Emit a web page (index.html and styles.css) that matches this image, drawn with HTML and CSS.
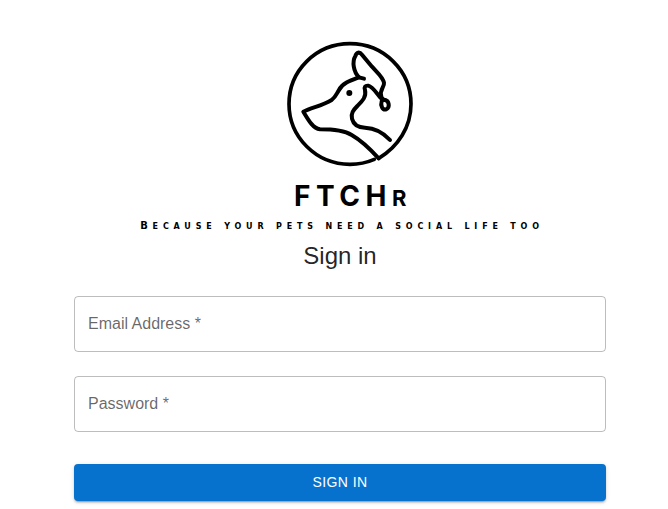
FILE: index.html
```html
<!DOCTYPE html>
<html lang="en">
<head>
<meta charset="utf-8">
<title>FTCHr - Sign in</title>
<link rel="stylesheet" href="styles.css">
</head>
<body>
<main class="page">
  <svg class="logo" viewBox="0 0 480 435" width="160" height="145" fill="none" stroke="#000" stroke-linecap="round" stroke-linejoin="round" aria-label="FTCHr logo">
    <path class="ring" d="M313 388 C290 398 265 403 240 403 C138 403 57 321 57 222 C57 122 138 41 240 41 C341 41 423 122 423 222 C423 290 385 350 326 385"/>
    <path class="line" d="M326 385 C305 362 280 335 245 315 C225 303 190 298 150 298 C130 295 118 275 100 245 C125 232 155 228 185 210 C198 200 200 190 207 180 C217 160 240 152 267 142 C250 125 246 95 256 78 C260 67 268 64 276 74 L306 110 C322 128 338 140 342 158 C344 172 327 178 334 200 C337 207 341 210 345 210"/>
    <path class="line" d="M267 142 L282 146"/>
    <path class="line" d="M345 210 C357 212 361 232 349 238 C337 242 331 226 335 214 C337 209 341 208 345 210"/>
    <path class="line" d="M332 204 C320 190 308 170 295 167 C285 166 282 172 285 180 C290 202 275 215 262 228 C250 240 242 250 246 266 C250 282 262 292 285 293 C315 294 340 308 360 330"/>
    <circle cx="238" cy="189" r="9" fill="#000" stroke="none"/>
  </svg>
  <h1 class="brand">FTCH<span class="brand-small">R</span></h1>
  <p class="tagline">Because your pets need a social life too</p>
  <h2 class="title">Sign in</h2>
  <form class="form">
    <label class="field">Email Address *</label>
    <label class="field">Password *</label>
    <button class="submit" type="button">SIGN IN</button>
  </form>
</main>
</body>
</html>
```
FILE: styles.css
```css
* { box-sizing: border-box; }
html, body { margin: 0; height: 100%; background: #fff; overflow: hidden; }
.page {
  display: flex;
  flex-direction: column;
  align-items: center;
  padding: 30px 0 0 12px;
  font-family: "Liberation Sans", Arial, sans-serif;
}
.logo { display: block; margin-left: 20px; }
.ring { stroke-width: 11; }
.line { stroke-width: 12; }
.brand {
  margin: 3px 0 0 26px;
  font-family: "Inter", sans-serif;
  font-size: 28px;
  font-weight: 700;
  line-height: 36px;
  letter-spacing: 5.5px;
  color: #000;
}
.brand-small { font-size: 22px; }
.tagline {
  margin: 3px 0 0 4px;
  font-family: "DejaVu Sans", sans-serif;
  font-size: 8px;
  font-weight: 700;
  line-height: 14px;
  text-transform: uppercase;
  letter-spacing: 4.82px;
  color: #000;
}
.tagline::first-letter { font-size: 10px; }
.title {
  margin: 6px 0 0;
  font-size: 24px;
  font-weight: 400;
  line-height: 32px;
  color: rgba(0, 0, 0, .87);
}
.form {
  display: flex;
  flex-direction: column;
  width: 532px;
  margin-top: 24px;
  gap: 24px;
}
.field {
  display: flex;
  align-items: center;
  height: 56px;
  padding: 0 13px;
  border: 1px solid rgba(0, 0, 0, .26);
  border-radius: 4px;
  font-size: 16px;
  color: rgba(0, 0, 0, .6);
}
.submit {
  height: 37px;
  margin-top: 8px;
  padding: 0 0 2px;
  border: 0;
  border-radius: 4px;
  background: #0672cd;
  color: #fff;
  font-family: inherit;
  font-size: 14px;
  letter-spacing: .4px;
  box-shadow: 0 3px 1px -2px rgba(0,0,0,.2), 0 2px 2px 0 rgba(0,0,0,.14), 0 1px 5px 0 rgba(0,0,0,.12);
}
```
